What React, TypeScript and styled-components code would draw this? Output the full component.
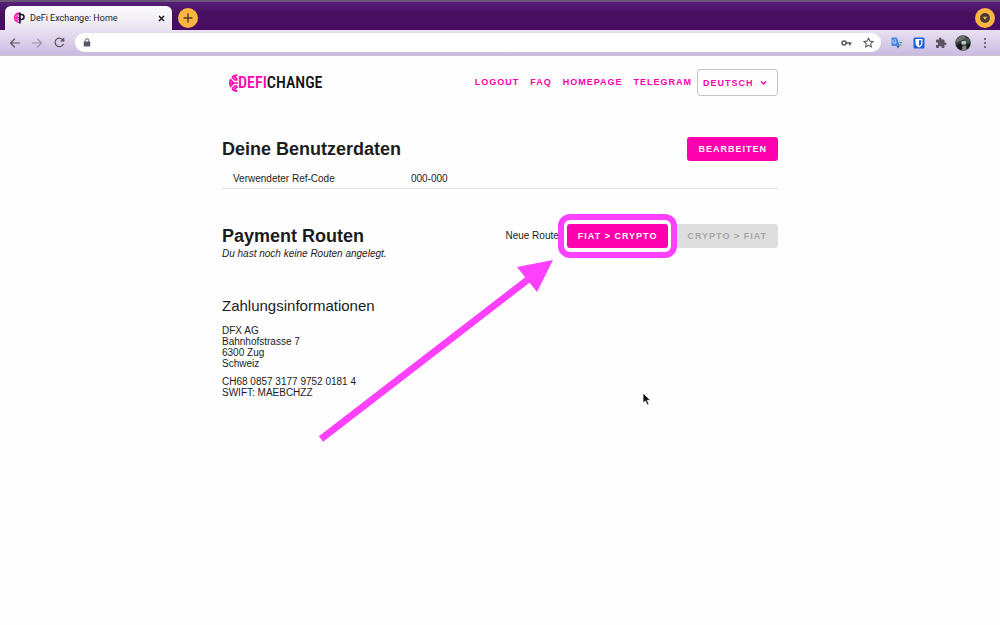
import React from 'react';
import styled, { createGlobalStyle } from 'styled-components';

const pink = '#ff00af';
const marker = '#ff40ff';

const GlobalStyle = createGlobalStyle`
  * { box-sizing: border-box; }
  body {
    margin: 0;
    min-height: 100vh;
    background: #fefefe;
    color: #1c1c1c;
    font-family: "Liberation Sans", Arial, sans-serif;
    font-size: 10px;
    line-height: 11px;
  }
  button, input, select { font-family: inherit; }
`;

const TabStrip = styled.div`
  display: flex;
  align-items: flex-end;
  height: 30px;
  padding: 0 5px;
  border-top: 2px solid #6a5577;
  background: linear-gradient(#56207a, #48105f 40%, #470b63);
`;

const Tab = styled.div`
  display: flex;
  align-items: center;
  width: 167px;
  height: 24px;
  padding: 0 7px 0 9px;
  border-radius: 6px 6px 0 0;
  background: linear-gradient(#fdfcfe, #eae3f3);
`;

const TabTitle = styled.span`
  flex: 1;
  margin-left: 5px;
  color: #1f1c24;
  font-family: Roboto, sans-serif;
  font-size: 9px;
  white-space: nowrap;
`;

const IconButton = styled.button<{ $size?: number }>`
  display: flex;
  align-items: center;
  justify-content: center;
  flex: none;
  width: ${(p) => p.$size ?? 12}px;
  height: ${(p) => p.$size ?? 12}px;
  padding: 0;
  border: 0;
  background: none;
  color: #5b5661;
`;

const RoundButton = styled(IconButton)<{ $end?: boolean }>`
  align-self: center;
  margin-top: 4px;
  margin-left: ${(p) => (p.$end ? 'auto' : '6px')};
  border-radius: 50%;
  background: #fbb540;
  color: #4c3a2c;
`;

const ProfileButton = styled(IconButton)`
  margin: 0 -2px;
`;

const Toolbar = styled.div`
  display: flex;
  align-items: center;
  gap: 10px;
  height: 26px;
  padding: 0 9px;
  border-bottom: 1px solid #c9c2d0;
  background: linear-gradient(#e8e1f1, #cbbae0);
`;

const AddressBar = styled.div`
  display: flex;
  align-items: center;
  flex: 1;
  gap: 10px;
  height: 19px;
  padding: 0 7px 0 8px;
  border-radius: 10px;
  background: #fff;
`;

const AddressInput = styled.input`
  flex: 1;
  min-width: 0;
  border: 0;
  outline: 0;
  background: none;
  font-size: 10px;
`;

const Page = styled.main`
  position: relative;
  max-width: 556px;
  margin: 0 auto;
  padding: 13px 0 80px;
`;

const Header = styled.header`
  display: flex;
  align-items: center;
  justify-content: space-between;
  height: 27px;
`;

const Brand = styled.a`
  display: flex;
  align-items: center;
  padding-left: 7px;
  color: #111;
  font-family: "Roboto Condensed", "Liberation Sans Narrow", "Liberation Sans", sans-serif;
  font-size: 16px;
  font-weight: 500;
  line-height: 20px;
  text-decoration: none;
`;

const BrandAccent = styled.span`
  color: ${pink};
`;

const Nav = styled.nav`
  display: flex;
  align-items: center;
  gap: 11px;
`;

const NavLink = styled.a`
  color: ${pink};
  font-size: 9px;
  font-weight: 700;
  letter-spacing: 1px;
  text-decoration: none;
`;

const Language = styled.div`
  position: relative;
  margin-left: -6px;
`;

const LanguageSelect = styled.select`
  display: block;
  width: 81px;
  height: 27px;
  padding: 0 5px;
  border: 1px solid #c4c4c4;
  border-radius: 3px;
  appearance: none;
  background: transparent;
  color: ${pink};
  font-size: 9px;
  font-weight: 700;
  letter-spacing: 1px;
`;

const Chevron = styled.svg`
  position: absolute;
  right: 11px;
  top: 10px;
  pointer-events: none;
`;

const Section = styled.section<{ $gap: number }>`
  margin-top: ${(p) => p.$gap}px;
`;

const SectionHead = styled.div`
  display: flex;
  align-items: center;
  justify-content: space-between;
  height: 24px;
`;

const Title = styled.h2`
  margin: 0;
  font-size: 18px;
  line-height: 24px;
`;

const SubTitle = styled.h3`
  margin: 0 0 11px;
  font-size: 15px;
  font-weight: 400;
  line-height: 16px;
`;

const Button = styled.button`
  position: relative;
  height: 24px;
  padding: 0 11px;
  border: 0;
  border-radius: 3px;
  background: ${pink};
  color: #fff;
  font-size: 9px;
  font-weight: 700;
  letter-spacing: 1px;
  white-space: nowrap;
  &:disabled {
    background: #dedede;
    color: #a6a6a6;
  }
`;

const Highlight = styled.span`
  position: absolute;
  z-index: 1;
  inset: -10px -9px;
  border: 6px solid ${marker};
  border-radius: 12px;
  box-shadow: inset 0 0 0 3px #fff;
  pointer-events: none;
`;

const Actions = styled.div`
  display: flex;
  align-items: center;
  gap: 8px;
`;

const DataTable = styled.table`
  width: 100%;
  margin-top: 8px;
  border-collapse: collapse;
  th, td {
    height: 19px;
    padding: 0 0 0 11px;
    border-bottom: 1px solid #e2e2e2;
    font-weight: 400;
    text-align: left;
  }
  th { width: 32%; }
`;

const Note = styled.p`
  margin: 0;
  font-style: italic;
`;

const Lines = styled.p`
  margin: 0 0 7px;
`;

const Overlay = styled.svg<{ $x: number; $y: number }>`
  position: absolute;
  left: ${(p) => p.$x}px;
  top: ${(p) => p.$y}px;
  pointer-events: none;
`;

const line = { fill: 'none', stroke: 'currentColor', strokeLinecap: 'round', strokeLinejoin: 'round' } as const;

const LogoMark = () => (
  <svg width="9" height="18" viewBox="0 0 18 36" fill="none" stroke={pink} strokeWidth="3" aria-hidden="true">
    <path d="M17 2C12 2 8 4 6 7M4 10C2 13 1.500 16 1.500 18s.5 5 2.500 8M6 29c2 3 6 5 11 5" />
    <path d="M1 18h17M17 12h-5l-6-5M17 24h-5l-6 5M12 2v5l5 3M12 34v-5l5-3M4 12l5 6-5 6" />
  </svg>
);

const Favicon = () => (
  <svg width="11" height="12" viewBox="0 0 22 24" fill="none" aria-hidden="true">
    <path d="M11 2C5 2 1 6 1 11s4 10 10 10M11 2v19M1 11h10M6 4v14" stroke="#f20bb0" strokeWidth="2.500" />
    <path d="M12 1v22M9 5h6a5 5 0 0 1 0 10H9" stroke="#17131a" strokeWidth="3" />
  </svg>
);

const Arrow = ({ back }: { back?: boolean }) => (
  <svg width="12" height="12" viewBox="0 0 24 24" {...line} strokeWidth="2.400" opacity={back ? 1 : 0.45}>
    <path d={back ? 'M21 12H3M11 4l-8 8 8 8' : 'M3 12h18M13 4l8 8-8 8'} />
  </svg>
);

export default function App() {
  return (
    <>
      <GlobalStyle />
      <TabStrip>
        <Tab>
          <Favicon />
          <TabTitle>DeFi Exchange: Home</TabTitle>
          <IconButton aria-label="Close tab" $size={8}>
            <svg width="7" height="7" viewBox="0 0 14 14" fill="none" stroke="#17131a" strokeWidth="2.800">
              <path d="M2 2l10 10M12 2L2 12" />
            </svg>
          </IconButton>
        </Tab>
        <RoundButton aria-label="New tab" $size={20}>
          <svg width="10" height="10" viewBox="0 0 20 20" {...line} strokeWidth="2.800">
            <path d="M10 2v16M2 10h16" />
          </svg>
        </RoundButton>
        <RoundButton aria-label="Search tabs" $size={20} $end>
          <svg width="10" height="10" viewBox="0 0 20 20">
            <circle cx="10" cy="10" r="10" fill="#453c38" />
            <path d="M5.500 7.500h9L10 13.500z" fill="#fbb540" />
          </svg>
        </RoundButton>
      </TabStrip>
      <Toolbar>
        <IconButton aria-label="Back"><Arrow back /></IconButton>
        <IconButton aria-label="Forward"><Arrow /></IconButton>
        <IconButton aria-label="Reload">
          <svg width="11" height="11" viewBox="0 0 22 22" {...line} strokeWidth="2.400">
            <path d="M18.500 14.500A8.500 8.500 0 1 1 17 5l2.500 2.500" />
            <path d="M20 2v6.500h-6.500z" fill="currentColor" strokeWidth="1" />
          </svg>
        </IconButton>
        <AddressBar>
          <svg width="8" height="9" viewBox="0 0 16 18" aria-hidden="true">
            <rect x="1.500" y="7" width="13" height="10" rx="1.500" fill="#5b5661" />
            <path d="M4.500 8V5a3.500 3.500 0 0 1 7 0v3" fill="none" stroke="#5b5661" strokeWidth="2" />
          </svg>
          <AddressInput aria-label="Address" />
          <IconButton aria-label="Passwords">
            <svg width="11" height="8" viewBox="0 0 22 14" fill="none" stroke="currentColor" strokeWidth="3">
              <circle cx="6" cy="7" r="4" />
              <path d="M10 7h11M17.500 7v5" />
            </svg>
          </IconButton>
          <IconButton aria-label="Bookmark">
            <svg width="11" height="11" viewBox="0 0 24 24" {...line} strokeWidth="2.200">
              <path d="M12 2l3 7 7.500.600-5.700 5 1.700 7.400-6.500-4-6.500 4 1.700-7.400-5.700-5L9 9z" />
            </svg>
          </IconButton>
        </AddressBar>
        <IconButton aria-label="Translate">
          <svg width="12" height="12" viewBox="0 0 24 24">
            <path d="M10 6h12a1 1 0 0 1 1 1v15a1 1 0 0 1-1 1h-7z" fill="#c9ccd0" />
            <path d="M2 1h10l5 17H2a1 1 0 0 1-1-1V2a1 1 0 0 1 1-1z" fill="#4685ec" />
            <path d="M11 18h6l-3 5z" fill="#2454b8" />
            <path d="M10 7a3.500 3.500 0 1 0 .5 3H7.500" fill="none" stroke="#eef3fd" strokeWidth="1.500" />
            <path d="M16 11h6M20 11c0 3-1 4-3 6M17 14l4 4" fill="none" stroke="#6f7a86" strokeWidth="1.300" />
          </svg>
        </IconButton>
        <IconButton aria-label="Password vault">
          <svg width="12" height="12" viewBox="0 0 24 24">
            <rect x="1" y="1" width="22" height="22" rx="3" fill="#175ddc" />
            <path d="M5 4h14v8c0 4-3 7-7 9-4-2-7-5-7-9z" fill="#fff" />
            <path d="M12 6.500h4.500V12c0 2.500-2 4.500-4.500 6z" fill="#175ddc" />
          </svg>
        </IconButton>
        <IconButton aria-label="Extensions">
          <svg width="12" height="12" viewBox="0 0 24 24" fill="currentColor">
            <path d="M20.500 11H19V7a2 2 0 0 0-2-2h-4V3.500a2.500 2.500 0 0 0-5 0V5H4a2 2 0 0 0-2 2v3.800h1.500a2.700 2.700 0 0 1 0 5.400H2V20a2 2 0 0 0 2 2h3.800v-1.500a2.700 2.700 0 0 1 5.400 0V22H17a2 2 0 0 0 2-2v-4h1.500a2.500 2.500 0 0 0 0-5z" />
          </svg>
        </IconButton>
        <ProfileButton aria-label="Profile" $size={16}>
          <svg width="16" height="16" viewBox="0 0 32 32">
            <circle cx="16" cy="16" r="15.500" fill="#34383a" />
            <path d="M2 10Q8 0 18 1l4 5-9 5-10 4z" fill="#697068" />
            <path d="M20 4q8 2 11 10l-8 2-5-6z" fill="#4d5350" />
            <rect x="13" y="12" width="9" height="7" rx="2" fill="#b9c8c8" />
            <path d="M3 20l9-3 3 8-4 5q-6-3-8-10zM23 20l8-3q-1 8-7 12z" fill="#161819" />
            <path d="M14 23l8-2 1 8-8 2z" fill="#7d8583" />
          </svg>
        </ProfileButton>
        <IconButton aria-label="Menu">
          <svg width="12" height="12" viewBox="0 0 24 24" fill="currentColor">
            <circle cx="12" cy="4" r="2.200" />
            <circle cx="12" cy="12" r="2.200" />
            <circle cx="12" cy="20" r="2.200" />
          </svg>
        </IconButton>
      </Toolbar>

      <Page>
        <Header>
          <Brand href="#">
            <LogoMark />
            <BrandAccent>DEFI</BrandAccent>CHANGE
          </Brand>
          <Nav>
            <NavLink href="#">LOGOUT</NavLink>
            <NavLink href="#">FAQ</NavLink>
            <NavLink href="#">HOMEPAGE</NavLink>
            <NavLink href="#">TELEGRAM</NavLink>
            <Language>
              <LanguageSelect aria-label="Sprache">
                <option>DEUTSCH</option>
                <option>ENGLISH</option>
              </LanguageSelect>
              <Chevron width="7" height="7" viewBox="0 0 14 14" fill="none" stroke={pink} strokeWidth="3">
                <path d="M2 5l5 5 5-5" />
              </Chevron>
            </Language>
          </Nav>
        </Header>

        <Section $gap={41}>
          <SectionHead>
            <Title>Deine Benutzerdaten</Title>
            <Button>BEARBEITEN</Button>
          </SectionHead>
          <DataTable>
            <tbody>
              <tr>
                <th scope="row">Verwendeter Ref-Code</th>
                <td>000-000</td>
              </tr>
            </tbody>
          </DataTable>
        </Section>

        <Section $gap={35}>
          <SectionHead>
            <Title>Payment Routen</Title>
            <Actions>
              <span>Neue Route</span>
              <Button>
                FIAT &gt; CRYPTO
                <Highlight />
              </Button>
              <Button disabled>CRYPTO &gt; FIAT</Button>
            </Actions>
          </SectionHead>
          <Note>Du hast noch keine Routen angelegt.</Note>
        </Section>

        <Section $gap={39}>
          <SubTitle>Zahlungsinformationen</SubTitle>
          <Lines>
            DFX AG<br />
            Bahnhofstrasse 7<br />
            6300 Zug<br />
            Schweiz
          </Lines>
          <Lines>
            CH68 0857 3177 9752 0181 4<br />
            SWIFT: MAEBCHZZ
          </Lines>
        </Section>

        <Overlay $x={96} $y={202} width="238" height="186" viewBox="0 0 238 186" aria-hidden="true">
          <path d="M3 181L212 20" stroke={marker} strokeWidth="7" />
          <path d="M235 2L199 9l20 25z" fill={marker} />
        </Overlay>
        <Overlay $x={420} $y={336} width="9" height="14" viewBox="0 0 18 28" aria-hidden="true">
          <path d="M2 2v20l5-4 3.500 8 3.500-1.500-3.500-8H17z" fill="#111" stroke="#fff" strokeWidth="1.500" />
        </Overlay>
      </Page>
    </>
  );
}
